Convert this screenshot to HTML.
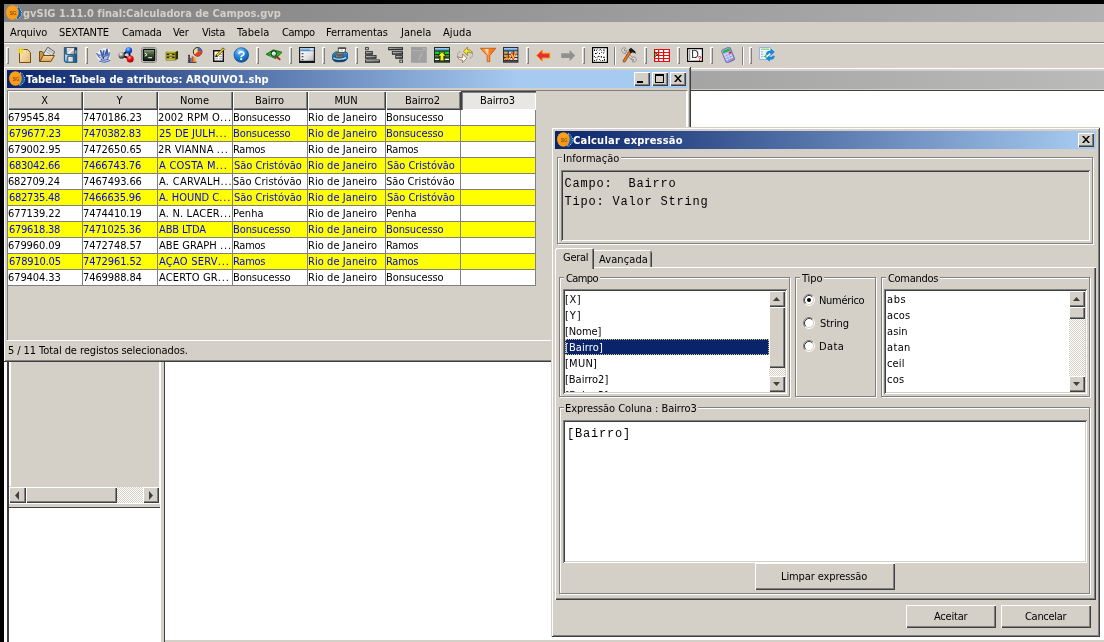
<!DOCTYPE html>
<html><head><meta charset="utf-8"><title>gvSIG</title><style>
*{box-sizing:border-box;margin:0;padding:0}
html,body{width:1104px;height:642px;overflow:hidden;background:#fff}
body{position:relative;font:11px "DejaVu Sans Condensed","Liberation Sans",sans-serif;color:#000;letter-spacing:-.1px}
#w{position:absolute;left:0;top:0;width:1104px;height:642px;overflow:hidden;will-change:transform;background:#fff}
.a{position:absolute}
.t{position:absolute;white-space:nowrap;line-height:13px;height:13px}
.face{background:#d4d0c8}
.btn{position:absolute;background:#d4d0c8;box-shadow:inset 1px 1px 0 #fff,inset -1px -1px 0 #404040,inset -2px -2px 0 #808080}
.sunk{position:absolute;box-shadow:inset 1px 1px 0 #808080,inset -1px -1px 0 #fff,inset 2px 2px 0 #404040,inset -2px -2px 0 #d4d0c8}
.frame{position:absolute;background:#d4d0c8;box-shadow:inset 1px 1px 0 #d4d0c8,inset -1px -1px 0 #404040,inset 2px 2px 0 #fff,inset -2px -2px 0 #808080}
.grp{position:absolute;border:1px solid #808080;box-shadow:1px 1px 0 #fff,inset 1px 1px 0 #fff}
.grp>span{position:absolute;top:-6px;left:4px;background:#d4d0c8;padding:0 1px;line-height:13px;white-space:nowrap}
.tb{font-weight:bold;color:#fff}
.grip{position:absolute;width:3px;height:17px;top:47px;background:#d4d0c8;box-shadow:inset 1px 1px 0 #fff,inset -1px -1px 0 #808080}
.mono{font-family:"Liberation Mono",monospace;font-size:12px;letter-spacing:.8px}
.hatch{background-image:conic-gradient(#fff 25%,#d4d0c8 0 50%,#fff 0 75%,#d4d0c8 0);background-size:2px 2px}
.hd{position:absolute;top:91px;height:19px;background:#d4d0c8;box-shadow:inset 1px 1px 0 #fff,inset -1px -1px 0 #404040,inset -2px -2px 0 #808080;text-align:center;line-height:20px;padding-right:2px}
.row{position:absolute;left:8px;width:528px;height:16px}
.cy{color:#0000ff}
.c{position:absolute;top:0;height:15px;line-height:15px;white-space:nowrap;overflow:hidden;padding-left:1px}
.li{position:absolute;left:0;height:16px;line-height:18px;white-space:nowrap;padding-left:1px}
</style></head><body><div id="w">

<svg width="0" height="0" style="position:absolute"><defs>
<linearGradient id="gPage" x1="0" y1="0" x2="1" y2="1"><stop offset="0" stop-color="#fdeec8"/><stop offset="1" stop-color="#e2b76c"/></linearGradient>
<linearGradient id="gFold" x1="0" y1="0" x2="0" y2="1"><stop offset="0" stop-color="#f3d59a"/><stop offset="1" stop-color="#d9a75a"/></linearGradient>
<linearGradient id="gFlop" x1="0" y1="0" x2="1" y2="0"><stop offset="0" stop-color="#0d5f96"/><stop offset=".35" stop-color="#3f9bd0"/><stop offset="1" stop-color="#0a5588"/></linearGradient>
<linearGradient id="gLabel" x1="0" y1="0" x2="1" y2="1"><stop offset="0" stop-color="#f4f4f4"/><stop offset=".5" stop-color="#c8c8c8"/><stop offset="1" stop-color="#a0a0a0"/></linearGradient>
<radialGradient id="gGray" cx=".4" cy=".3" r=".75"><stop offset="0" stop-color="#ffffff"/><stop offset=".45" stop-color="#909090"/><stop offset="1" stop-color="#101010"/></radialGradient>
<radialGradient id="gBlueB" cx=".4" cy=".3" r=".7"><stop offset="0" stop-color="#a0d0ff"/><stop offset=".5" stop-color="#1860f0"/><stop offset="1" stop-color="#0030a0"/></radialGradient>
<radialGradient id="gRedB" cx=".4" cy=".3" r=".7"><stop offset="0" stop-color="#ffb0b0"/><stop offset=".45" stop-color="#ff1010"/><stop offset="1" stop-color="#a00000"/></radialGradient>
<linearGradient id="gTerm" x1="0" y1="0" x2="0" y2="1"><stop offset="0" stop-color="#90a878"/><stop offset=".45" stop-color="#40543a"/><stop offset="1" stop-color="#0c140a"/></linearGradient>
<radialGradient id="gHelp" cx=".4" cy=".25" r=".8"><stop offset="0" stop-color="#9ad4ff"/><stop offset=".45" stop-color="#2a8ce0"/><stop offset="1" stop-color="#084a98"/></radialGradient>
<linearGradient id="gWin" x1="0" y1="0" x2="1" y2="1"><stop offset="0" stop-color="#ffffff"/><stop offset=".6" stop-color="#e4e4e4"/><stop offset="1" stop-color="#a8a8a8"/></linearGradient>
<linearGradient id="gTitle" x1="0" y1="0" x2="0" y2="1"><stop offset="0" stop-color="#b8dcf8"/><stop offset="1" stop-color="#2f7cc8"/></linearGradient>
<linearGradient id="gBar" x1="0" y1="0" x2="0" y2="1"><stop offset="0" stop-color="#101010"/><stop offset=".3" stop-color="#585858"/><stop offset=".55" stop-color="#a8acac"/><stop offset=".8" stop-color="#505050"/><stop offset="1" stop-color="#080808"/></linearGradient>
<linearGradient id="gBar2" x1="0" y1="0" x2=".25" y2="1"><stop offset="0" stop-color="#eef0f0"/><stop offset=".5" stop-color="#8c9090"/><stop offset="1" stop-color="#3c3c3c"/></linearGradient>
<linearGradient id="gBarB" x1="0" y1="0" x2="0" y2="1"><stop offset="0" stop-color="#909090"/><stop offset=".5" stop-color="#606060"/><stop offset="1" stop-color="#080808"/></linearGradient>
<linearGradient id="gDkGreen" x1="0" y1="0" x2="0" y2="1"><stop offset="0" stop-color="#58a858"/><stop offset="1" stop-color="#185018"/></linearGradient>
<linearGradient id="gFunnel" x1="0" y1="0" x2="1" y2="0"><stop offset="0" stop-color="#f07818"/><stop offset=".4" stop-color="#ffa860"/><stop offset=".6" stop-color="#f88a30"/><stop offset="1" stop-color="#e86a10"/></linearGradient>
<linearGradient id="gPrn" x1="0" y1="0" x2="0" y2="1"><stop offset="0" stop-color="#3c9ad8"/><stop offset=".55" stop-color="#1468b0"/><stop offset="1" stop-color="#06305c"/></linearGradient>
<linearGradient id="gCalc" x1="0" y1="0" x2="1" y2="1"><stop offset="0" stop-color="#c4c4f4"/><stop offset="1" stop-color="#8484cc"/></linearGradient>
<radialGradient id="gLogo" cx=".45" cy=".4" r=".7"><stop offset="0" stop-color="#ffa828"/><stop offset="1" stop-color="#fb9410"/></radialGradient>
</defs></svg>

<div class="a" style="left:4px;top:4px;width:1440px;height:18px;background:linear-gradient(to right,#808080,#c0c0c0)"></div>
<div class="t tb" style="left:23.00px;top:7px;letter-spacing:-0.003px;color:#d4d0c8">gvSIG 1.11.0 final:Calculadora de Campos.gvp</div>
<div class="a" style="left:4px;top:22px;width:1100px;height:20px;background:#d4d0c8;"></div>
<div class="t " style="left:10.00px;top:26px;letter-spacing:-0.100px;">Arquivo</div>
<div class="t " style="left:59.00px;top:26px;letter-spacing:-0.100px;">SEXTANTE</div>
<div class="t " style="left:122.00px;top:26px;letter-spacing:-0.240px;">Camada</div>
<div class="t " style="left:173.00px;top:26px;letter-spacing:-0.100px;">Ver</div>
<div class="t " style="left:202.00px;top:26px;letter-spacing:-0.275px;">Vista</div>
<div class="t " style="left:237.00px;top:26px;letter-spacing:0.180px;">Tabela</div>
<div class="t " style="left:282.00px;top:26px;letter-spacing:-0.450px;">Campo</div>
<div class="t " style="left:326.00px;top:26px;letter-spacing:-0.030px;">Ferramentas</div>
<div class="t " style="left:401.00px;top:26px;letter-spacing:0.040px;">Janela</div>
<div class="t " style="left:443.00px;top:26px;letter-spacing:0.075px;">Ajuda</div>
<div class="a" style="left:4px;top:42px;width:1100px;height:1px;background:#808080;"></div>
<div class="a" style="left:4px;top:43px;width:1100px;height:1px;background:#ffffff;"></div>
<div class="a" style="left:4px;top:44px;width:1100px;height:27px;background:#d4d0c8;"></div>
<div class="grip" style="left:6px"></div>
<div class="grip" style="left:85px"></div>
<div class="grip" style="left:256px"></div>
<div class="grip" style="left:289px"></div>
<div class="grip" style="left:322px"></div>
<div class="grip" style="left:355px"></div>
<div class="grip" style="left:526px"></div>
<div class="grip" style="left:582px"></div>
<div class="grip" style="left:644px"></div>
<div class="grip" style="left:677px"></div>
<div class="grip" style="left:710px"></div>
<div class="grip" style="left:749px"></div>
<svg class="a" style="left:16px;top:47px" width="16" height="16" viewBox="0 0 16 16"><path d="M3.500 2.500h7.800l3.200 3.200v9.800h-11z" fill="url(#gPage)" stroke="#7b4a05"/><path d="M10.600 3.200v3h3.200z" fill="#fff" stroke="#c9a060" stroke-width=".5"/><path d="M4.800.2l1 2.200 2.400.2-1.800 1.600.6 2.400-2.200-1.300-2.100 1.300.6-2.400L1.500 2.600l2.300-.2z" fill="#f6e61c" stroke="#d8c000" stroke-width=".3"/></svg>
<svg class="a" style="left:39px;top:47px" width="16" height="16" viewBox="0 0 16 16"><path d="M.5 14.500v-10h2.600l1.600 1.800h3v8.200z" fill="#c89848" stroke="#7b4a05"/><path d="M8.800.2l6.900 4.600-4 6.600-7.600-4z" fill="#e4e4e4" stroke="#4a4a4a" stroke-width=".9"/><path d="M9 2l5.400 3.600-.8 1.200L8.200 3.400z" fill="#b8b8b8"/><path d="M7.400 4.800l4.800 3" stroke="#9a9a9a" stroke-width=".8"/><path d="M1 14.500l3.200-6h11.200l-3.400 6z" fill="url(#gFold)" stroke="#7b4a05"/></svg>
<svg class="a" style="left:62px;top:47px" width="16" height="16" viewBox="0 0 16 16"><path d="M2.300.4h12.500v15.200H3.800L2.300 14z" fill="url(#gFlop)" stroke="#0a4672" stroke-width=".7"/><path d="M2.900 7c.2 3 .4 5 .2 6.600l1.400.6c0-2.600.6-5 1.800-6.200z" fill="#c4e6fc" opacity=".85"/><path d="M4.300.5h8.300v7H4.300z" fill="url(#gLabel)" stroke="#3c4650" stroke-width=".8"/><path d="M5.400 6.200L10.800 1.400h1v1.400L7.400 6.800z" fill="#fff" opacity=".8"/><path d="M5.900 9.500h5.100v5.400H5.900z" fill="#ececec" stroke="#4a5560" stroke-width=".8"/><path d="M8.600 10.400h1.800v3.800H8.600z" fill="#d4d4d4"/><path d="M13.200.7h1.400v2.200h-1.400z" fill="#062c4c"/><path d="M13.800 3.600v3" stroke="#d8f0ff" stroke-width=".8"/></svg>
<svg class="a" style="left:95px;top:47px" width="16" height="16" viewBox="0 0 16 16"><path d="M.8 5.600l3-.8L4.600 2l2.600.2L8.800 1l2 .4 1.600 1 1.600-.8 1 2.600-.6 3 .8 2.800-.4 2.600.6 1.600-2.600 1.400-4.600.6-4.400-1 .2-2.200-2.200-2.600z" fill="#eef1fa"/><path d="M2 6.200c1.200 2.400 2.600 4.200 5 6l5.600-.6c1.200-2 1.800-4.400 1.600-6.800l-2 1.600L11.800 2.400 9.600 7 8.200 2.200 6.400 7.400z" fill="#a9bbe6"/><path d="M5.400 3l2.200 6.600L9 3.400M10 8.600l2-6.200.6 6" fill="none" stroke="#3f5ca6" stroke-width="1.500" stroke-linejoin="round"/><path d="M1.400 6c1.400 3 3 4.800 5.600 6.400M14.400 5.200c.2 2.600-.6 5-2 6.800M3.600 8.200l5.600 1.200 4.600-1.600" fill="none" stroke="#5673b8" stroke-width="1.200"/><path d="M4.200 14c3.200 1.600 8 1.400 11-.8M5.600 12.600c2.600.8 5.600.6 8-.4" fill="none" stroke="#4a68b0" stroke-width="1.300"/><circle cx="8.200" cy="10.800" r=".9" fill="#141c38"/><path d="M4.600 8.600h1.200v1.200H4.600zM6.400 10.400h1.200v1.200H6.400zM5 10.800h1v1H5z" fill="#f4f6fc"/></svg>
<svg class="a" style="left:118px;top:47px" width="16" height="16" viewBox="0 0 16 16"><path d="M3.6 8.4L10.8 3.2l1.4 8.6z" fill="none" stroke="#111" stroke-width="1.8" stroke-linejoin="round"/><circle cx="3.6" cy="8.4" r="3.1" fill="url(#gGray)"/><circle cx="10.8" cy="3.5" r="3.3" fill="url(#gBlueB)"/><circle cx="12.2" cy="11.9" r="3.5" fill="url(#gRedB)"/></svg>
<svg class="a" style="left:141px;top:47px" width="16" height="16" viewBox="0 0 16 16"><rect x=".5" y=".5" width="15" height="15" rx="2.200" fill="#d8d8d8" stroke="#8a8a8a"/><rect x="2.300" y="2.300" width="11.400" height="11.400" rx=".8" fill="url(#gTerm)" stroke="#050805" stroke-width="1.200"/><path d="M3.900 6.200l2.200 1.500-2.200 1.500" fill="none" stroke="#fff" stroke-width="1"/><path d="M7.200 10.200h3.800v1H7.200z" fill="#fff"/></svg>
<svg class="a" style="left:164px;top:47px" width="16" height="16" viewBox="0 0 16 16"><path d="M2 5l2.6-1.2H14L11.2 5z" fill="#f4f090"/><path d="M11.2 5L14 3.8v8L11.2 13.2z" fill="#2c2c08"/><path d="M2 5h9.2v8.2H2z" fill="#d6cf3a" stroke="#6a6410" stroke-width=".6"/><path d="M2.6 6.6h8v1.6h-8zM2.6 9.6h8v1.6h-8z" fill="#1c1c04"/><path d="M5 6.9h3.2v.8H5zM5 9.9h3.2v.8H5z" fill="#ecec9a"/></svg>
<svg class="a" style="left:187px;top:47px" width="16" height="16" viewBox="0 0 16 16"><circle cx="10.6" cy="4.8" r="4.3" fill="#f1dc94" stroke="#111" stroke-width=".9"/><path d="M10.6 4.8V.5A4.3 4.3 0 0 1 14.7 3.6z" fill="#3c62c4"/><path d="M10.6 4.8l4.1-1.2A4.3 4.3 0 0 1 7.4 7.7z" fill="#e2401c"/><path d="M2.2 7.8v7.4M.8 15.2h8.6M1 8.8h1.2M1 11h1.2M1 13.2h1.2" stroke="#111" stroke-width="1" fill="none"/><path d="M3 11h1.6v3.7H3z" fill="#3c62c4"/><path d="M4.6 9.4h2v5.3h-2z" fill="#e2401c"/><path d="M6.6 10.6h2v4.1h-2z" fill="#f0a020"/></svg>
<svg class="a" style="left:210px;top:47px" width="16" height="16" viewBox="0 0 16 16"><path d="M3.700 3.800h9.600v10.400H3.700z" fill="#fff" stroke="#111" stroke-width="1.400"/><path d="M5.400 9.600h2.600M9.200 9.600h2.800M5.400 11.800h2.600M9.200 11.800h2.800M9.600 7.400h2.400" stroke="#9a9a9a" stroke-width="1"/><path d="M13 .8l1.500 1.500-6.900 6.900-2 .7.600-2.200z" fill="#f7d11e" stroke="#2a2200" stroke-width=".7"/><path d="M5.400 10.100l.7-2.200 1.500 1.400z" fill="#111"/></svg>
<svg class="a" style="left:233px;top:47px" width="16" height="16" viewBox="0 0 16 16"><circle cx="8.3" cy="8" r="7.3" fill="url(#gHelp)" stroke="#0b4c96" stroke-width=".7"/><text x="8.4" y="12.6" font-family="Liberation Sans,sans-serif" font-weight="bold" font-size="13" fill="#fff" text-anchor="middle">?</text></svg>
<svg class="a" style="left:266px;top:47px" width="16" height="16" viewBox="0 0 16 16"><path d="M0 7.300L7.300 2.800 16.100 5.200 9.700 11.700z" fill="#149414" stroke="#0a5a0a" stroke-width=".7"/><path d="M2.600 7.400l4.600-2.800M8.600 10.200l5.800-4.800M11.400 4.600l-3.600 5.600M3.800 8.600l3 .8" stroke="#6ee06e" stroke-width=".8" fill="none"/><path d="M10 9.200l3.600 3.100" stroke="#9a3418" stroke-width="2" stroke-linecap="round"/><circle cx="7.800" cy="6.600" r="2.700" fill="#c8e6dc" stroke="#102a18" stroke-width="1"/><path d="M6.600 6.800c.4-1.400 1.400-1.800 2.400-1.400" stroke="#fff" stroke-width=".8" fill="none"/><path d="M7 7.400l1.400.4" stroke="#8cd88c" stroke-width=".8"/></svg>
<svg class="a" style="left:299px;top:47px" width="16" height="16" viewBox="0 0 16 16"><path d="M.6.6h14.8v14.8H.6z" fill="url(#gWin)" stroke="#1c1c1c" stroke-width="1.2"/><path d="M1.2 1.2h13.6v3H1.2z" fill="url(#gTitle)"/><path d="M11 1.6h3.4v1.8H11z" fill="#d8e4ee"/><path d="M.6 14.6h14.8" stroke="#111" stroke-width="1.6"/><path d="M2.6 6h1.8v1.2H2.6zM2.6 9h1.8v1.2H2.6zM2.6 12h1.8v1.2H2.6z" fill="#4a4a4a"/></svg>
<svg class="a" style="left:332px;top:47px" width="16" height="16" viewBox="0 0 16 16"><path d="M.4 8.500C1 5.600 4 4.600 7 5l6-.2c2.500.2 3.400 2.200 3 4.700-.4 3.500-3 5.300-7 5.300H4.500C1.500 14.800-.2 12 .4 8.500z" fill="url(#gPrn)" stroke="#06305c" stroke-width=".7"/><path d="M1.400 10.800c2.800 1.800 9.800 1.800 12.800-.2" stroke="#b4dcfa" stroke-width="1.500" fill="none"/><path d="M4.700 5.600l6.400-.2-.5 5.200-7.400.2z" fill="#8e8e8e" stroke="#3a3a3a" stroke-width=".7"/><path d="M5.400 6.800l4.800-.1-.3 2.900-5.100.1z" fill="#5e5e5e"/><path d="M6.300 1.100h7.500l-1 4.300H6.300z" fill="#fff" stroke="#3a3a3a" stroke-width=".8"/><path d="M6.300 1.100h7.500" stroke="#2a2a2a" stroke-width="1.200"/><path d="M8.600 2.400h2.200v2H8.600z" fill="#c8c8c8"/><circle cx="4.200" cy="5" r="1" fill="#18a858"/></svg>
<svg class="a" style="left:365px;top:47px" width="16" height="16" viewBox="0 0 16 16"><rect x="0.10" y="0.10" width="3.70" height="3.10" fill="#3a3a3a"/><rect x="1.10" y="1.00" width="1.70" height="1.30" fill="#d4d8d8"/><rect x="0.10" y="4.10" width="7.70" height="3.70" rx=".4" fill="#1e1e1e"/><rect x="0.90" y="4.80" width="6.10" height="2.20" fill="url(#gBar2)"/><rect x="0.10" y="8.10" width="11.40" height="3.70" rx=".4" fill="#1e1e1e"/><rect x="0.90" y="8.80" width="9.80" height="2.20" fill="url(#gBar2)"/><rect x="0.10" y="12.60" width="14.80" height="3.20" rx=".4" fill="#1e1e1e"/><rect x="0.90" y="13.30" width="13.20" height="1.70" fill="url(#gBar2)"/></svg>
<svg class="a" style="left:388px;top:47px" width="16" height="16" viewBox="0 0 16 16"><rect x="0.20" y="0.10" width="14.80" height="3.20" rx=".4" fill="#1e1e1e"/><rect x="1.00" y="0.80" width="13.20" height="1.70" fill="url(#gBar2)"/><rect x="3.90" y="4.10" width="11.10" height="3.70" rx=".4" fill="#1e1e1e"/><rect x="4.70" y="4.80" width="9.50" height="2.20" fill="url(#gBar2)"/><rect x="7.30" y="8.10" width="7.70" height="3.70" rx=".4" fill="#1e1e1e"/><rect x="8.10" y="8.80" width="6.10" height="2.20" fill="url(#gBar2)"/><rect x="11.30" y="12.60" width="3.70" height="3.20" fill="#3a3a3a"/><rect x="12.30" y="13.50" width="1.70" height="1.40" fill="#d4d8d8"/></svg>
<svg class="a" style="left:411px;top:47px" width="16" height="16" viewBox="0 0 16 16"><path d="M0 0h15.800v15.800H0z" fill="#a0a0a0"/><path d="M.5.500h15v2.600H.5z" fill="#9c9c9c"/><path d="M.5 3.600h15" stroke="#b4b4b4" stroke-width=".8"/><path d="M7.600 13.400l3.800-8" stroke="#b0b0b0" stroke-width="1.400"/><path d="M11.600.8h3v1.600h-3z" fill="#b4b4b4"/></svg>
<svg class="a" style="left:434px;top:47px" width="16" height="16" viewBox="0 0 16 16"><path d="M0 0h16v15.700H0z" fill="#1e2a1e"/><path d="M1 1h14v2.600H1z" fill="url(#gTitle)"/><path d="M1 4.600h14v2.400H1z" fill="#18d418"/><path d="M1 8h14v2.600H1z" fill="url(#gDkGreen)"/><path d="M1 11.600h14v1.400H1z" fill="#fff"/><path d="M1 13.600h14v1.200H1z" fill="#2c4a2c"/><path d="M5.400 4.600v10.400M10.600 4.600v10.400" stroke="#0c3a0c" stroke-width=".8"/><path d="M8 4.800l4 4.200H9.800v4.800H6.200V9H4z" fill="#f6f01a" stroke="#3c3400" stroke-width=".7"/></svg>
<svg class="a" style="left:457px;top:47px" width="16" height="16" viewBox="0 0 16 16"><path d="M11 4.400c3.600-.2 5.400 2.400 4.400 4.600-.6 1.400-1.800 2.200-3.400 2.400" fill="none" stroke="#c8c8d0" stroke-width="2"/><path d="M5 11.400c-3.600.2-5.400-2.400-4.400-4.600C1.200 5.400 2.400 4.600 4 4.400" fill="none" stroke="#c8c8d0" stroke-width="2"/><path d="M11 4.400c3.600-.2 5.400 2.400 4.400 4.600-.6 1.400-1.800 2.200-3.400 2.400M5 11.400c-3.600.2-5.400-2.400-4.400-4.600C1.200 5.400 2.400 4.600 4 4.400" fill="none" stroke="#a87830" stroke-width=".8" stroke-dasharray="1 1"/><path d="M6.600 4.400L10.400.2v2.600c2.600-.2 4.600 1 5 3.400-1.400-1-3-1.400-5-1v3.200z" fill="#f8ee22" stroke="#7a6a20" stroke-width=".7"/><path d="M9.800 11.200L5.600 15.600V13c-2.600.2-4.600-1-5-3.400 1.400 1 3 1.400 5 1V7z" fill="#fff" stroke="#8a5a20" stroke-width=".7"/></svg>
<svg class="a" style="left:480px;top:47px" width="16" height="16" viewBox="0 0 16 16"><path d="M.4 1.300h15.400L9.800 8.700v6H7.200v-6z" fill="url(#gFunnel)" stroke="#c45608" stroke-width=".8" stroke-linejoin="round"/><path d="M5 2l2.800 5.600L8.600 2z" fill="#ffe4c8" opacity=".85"/><path d="M8.800 2.200c1.800-.6 3.200.2 3.200 1.400 0 1.400-1.600 2.200-2.800 1.800z" fill="#f47c1c"/></svg>
<svg class="a" style="left:503px;top:47px" width="16" height="16" viewBox="0 0 16 16"><path d="M0 0h15.400v15.700H0z" fill="#26303c"/><path d="M1 1h13.400v2.600H1z" fill="url(#gTitle)"/><path d="M1 4.600h3.800v2.200H1zM1 7.800h3.800v2.200H1z" fill="#dca23c"/><path d="M1 11h3.800v2H1z" fill="#e8e8e8"/><path d="M5.800 4.600h4v2.200h-4zM10.800 4.600h3.600v2.200h-3.600zM5.800 7.800h4v2.200h-4zM10.800 7.800h3.600v2.200h-3.600zM5.800 11h4v2h-4zM10.800 11h3.600v2h-3.600z" fill="#dcdce0"/><path d="M1 14h13.400v.8H1z" fill="#4a5460"/><path d="M1.200 12.600l2.800-1.800 2 1.600 2.800-5.600 1.600 4.600L13 4.200" fill="none" stroke="#e82020" stroke-width="2"/><path d="M1.200 12.600l2.800-1.800 2 1.600 2.800-5.600 1.600 4.600L13 4.200" fill="none" stroke="#f8f020" stroke-width="1"/></svg>
<svg class="a" style="left:536px;top:47px" width="16" height="16" viewBox="0 0 16 16"><path d="M.6 8.500L6.200 3v3.200h7.600v4.800H6.200v3.200z" fill="#e2303a" stroke="#ff9a00" stroke-width="1" stroke-linejoin="miter"/></svg>
<svg class="a" style="left:560px;top:47px" width="16" height="16" viewBox="0 0 16 16"><path d="M15.200 8.500L9.600 3v3.200H1.200v4.800h8.400v3.200z" fill="#919191"/></svg>
<svg class="a" style="left:592px;top:47px" width="16" height="16" viewBox="0 0 16 16"><path d="M.6.600h14.800v14.800H.6z" fill="#fff" stroke="#000" stroke-width="1.200"/><path d="M2.500 2.400v1.600M4 3.700l1.400-1.300M7.200 3.500l1.100-1.100 1.100 1.100M11 3.100h1.800M3 6.500h1.400l1-1M7 6.500h1M9.200 5.300h.9M11 6.500l1.400-1.300M2.200 9.200l1.400 1.400M5.200 10.500l1-1.100h1.300M9.300 9v1.700M11 10.300h1.800M2.100 13.500h1M4 13.500l1.400-1.300M7.200 12.200l1.400 1.300M10.100 13.500h1M12.500 12v1.700" fill="none" stroke="#000" stroke-width="1"/></svg>
<svg class="a" style="left:621px;top:47px" width="16" height="16" viewBox="0 0 16 16"><path d="M2.600 3.600l10 9.200" stroke="#8a8a8a" stroke-width="2.600" stroke-linecap="round"/><path d="M2.600 3.600l10 9.200" stroke="#e4e4e4" stroke-width="1.200" stroke-linecap="round"/><path d="M.6 3.800a2.600 2.600 0 0 1 4-2.600L3 3l.8 1 2-.6A2.600 2.600 0 0 1 2 5.800z" fill="#dcdcdc" stroke="#6a6a6a" stroke-width=".6"/><path d="M15.200 12a2.600 2.600 0 0 1-3.800 2.800l1.600-1.600-.8-1.200-2 .6a2.600 2.600 0 0 1 3.800-2.400z" fill="#dcdcdc" stroke="#6a6a6a" stroke-width=".6"/><path d="M3.200 14l6.400-10" stroke="#8a3c08" stroke-width="3" stroke-linecap="round"/><path d="M3.200 14l6.400-10" stroke="#e2781c" stroke-width="1.800" stroke-linecap="round"/><path d="M7.600 2.800L10 .8l4.400 3.600.4 2.600-1.600-1.200-2.200-.2-1.400 1z" fill="#1a1a1a"/></svg>
<svg class="a" style="left:654px;top:47px" width="16" height="16" viewBox="0 0 16 16"><path d="M0 2h16v13H0z" fill="#ea0c0c"/><path d="M1.2 3h2.8v2h-2.8zM5.2 3h3.8v2h-3.8zM10.2 3h4.6v2h-4.6zM1.2 6h2.8v2h-2.8zM5.2 6h3.8v2h-3.8zM10.2 6h4.6v2h-4.6zM1.2 9h2.8v2h-2.8zM5.2 9h3.8v2h-3.8zM10.2 9h4.6v2h-4.6zM1.2 12h2.8v2h-2.8zM5.2 12h3.8v2h-3.8zM10.2 12h4.6v2h-4.6z" fill="#fff"/><path d="M.3 4.800l3.400 2.700L.3 10.200z" fill="#ff9a00" stroke="#111" stroke-width=".8"/></svg>
<svg class="a" style="left:687px;top:47px" width="16" height="16" viewBox="0 0 16 16"><path d="M.6 1.600h14.800v12.800H.6z" fill="#fff" stroke="#000" stroke-width="1.150"/><path d="M2.200 3.600h1v1h-1zM2.200 5.600h1v1h-1zM2.200 7.600h1v1h-1zM2.200 9.600h1v1h-1zM2.200 11.600h1v1h-1z" fill="#000"/><text x="4.200" y="11.200" font-family="Liberation Sans,sans-serif" font-size="10.500" fill="#222">D</text><text x="10.600" y="14.200" font-family="Liberation Sans,sans-serif" font-weight="bold" font-size="7" fill="#e01010">?</text></svg>
<svg class="a" style="left:720px;top:47px" width="16" height="16" viewBox="0 0 16 16"><g transform="rotate(-22 8 8)"><rect x="3.400" y="1" width="9.400" height="14" rx="1.400" fill="url(#gCalc)" stroke="#5c5ca8" stroke-width=".7"/><path d="M4.400 2.200h7.400v2.400H4.400z" fill="#22b83c"/><path d="M9.800 5.800h2v1.600h-2z" fill="#e81c2c"/><path d="M4.400 5.800h2v1.600h-2zM7.100 5.800h2v1.600h-2zM4.400 8.400h2v1.600h-2zM7.100 8.400h2v1.600h-2zM9.800 8.400h2v1.600h-2zM4.400 11h2v1.600h-2zM7.100 11h2v1.600h-2zM9.800 11h2v1.600h-2z" fill="#dcdcfa"/></g></svg>
<svg class="a" style="left:759px;top:47px" width="16" height="16" viewBox="0 0 16 16"><path d="M.6.600h10.800v11.800H.6z" fill="#fff" stroke="#8cb0e4" stroke-width="1"/><path d="M2 2.200h8" stroke="#5cc85c" stroke-width="1"/><path d="M2 4h2.400v1.600H2zM2 6.400h2.400v1.600H2zM2 8.800h2.400v1.600H2z" fill="#a8c4ec"/><path d="M5.200 4h5v1.600h-5zM5.200 6.400h5v1.600h-5z" fill="#dce8f8"/><path d="M4.600 9.400l3-2.200v4.400z" fill="#40c060"/><path d="M6.800 7.400c.2-2.800 2.600-4.200 5-3.600V1.600l4 3.400-4 3.400V6.400c-1.600-.4-2.600.2-2.800 1.600z" fill="#1888d4"/><path d="M15.800 9c-.2 2.800-2.600 4.200-5 3.600v2.200l-4-3.400 4-3.400v2c1.600.4 2.600-.2 2.800-1.600z" fill="#1888d4"/></svg>
<svg class="a" style="left:6px;top:5px" width="17" height="16" viewBox="0 0 17 16"><path d="M11 1.800c1.800-.2 2.600 1 3 2.600 1.600 1.200 2 2.800 1.400 4.400.2 1.600-.6 2.800-1.800 3.400-.6 1.600-1.600 2.200-3 2.400z" fill="#0b62b4" stroke="#fff" stroke-width=".8" stroke-dasharray=".9 1.300"/><ellipse cx="6.400" cy="7.500" rx="6.300" ry="7.300" fill="url(#gLogo)"/><path d="M3.200 5h7.400v5.800H3.200z" fill="none" stroke="#f08c10" stroke-width=".5"/><text x="3.800" y="10.300" font-family="Liberation Sans,sans-serif" font-weight="bold" font-size="5.400" fill="#8a4e08" textLength="6.400" lengthAdjust="spacingAndGlyphs">SIG</text></svg>
<div class="a" style="left:742px;top:47px;width:1px;height:18px;background:#808080;"></div>
<div class="a" style="left:743px;top:47px;width:1px;height:18px;background:#ffffff;"></div>
<div class="a" style="left:614px;top:47px;width:1px;height:18px;background:#808080;"></div>
<div class="a" style="left:615px;top:47px;width:1px;height:18px;background:#ffffff;"></div>
<div class="a" style="left:4px;top:68px;width:1100px;height:1px;background:#ffffff;"></div>
<div class="a" style="left:4px;top:71px;width:1200px;height:18px;background:linear-gradient(to right,#808080,#c0c0c0)"></div>
<div class="a" style="left:4px;top:89px;width:1100px;height:1px;background:#d4d0c8;"></div>
<div class="a" style="left:4px;top:90px;width:1100px;height:1px;background:#404040;"></div>
<div class="a" style="left:4px;top:91px;width:1100px;height:551px;background:#fff;"></div>
<div class="a" style="left:165px;top:640px;width:939px;height:2px;background:#d4d0c8;"></div>
<div class="a" style="left:4px;top:362px;width:3px;height:280px;background:#fbfaf8;"></div>
<div class="a" style="left:7px;top:362px;width:2px;height:280px;background:#404040;"></div>
<div class="a" style="left:9px;top:362px;width:2px;height:145px;background:#ffffff;"></div>
<div class="a" style="left:11px;top:362px;width:148px;height:124px;background:#d4d0c8;"></div>
<div class="a" style="left:159px;top:362px;width:2px;height:280px;background:#ffffff;"></div>
<div class="a" style="left:161px;top:362px;width:3px;height:280px;background:#d4d0c8;"></div>
<div class="a" style="left:164px;top:362px;width:1px;height:280px;background:#404040;"></div>
<div class="a" style="left:9px;top:486px;width:150px;height:17px;background:#d4d0c8;"></div>
<div class="btn" style="left:9px;top:487px;width:17px;height:16px"></div>
<div class="btn" style="left:26px;top:487px;width:91px;height:16px"></div>
<div class="a hatch" style="left:117px;top:487px;width:26px;height:16px"></div>
<div class="btn" style="left:143px;top:487px;width:16px;height:16px"></div>
<svg class="a" style="left:15px;top:491px" width="5" height="9"><path d="M4 0v9L0 4.5z" fill="#404040"/></svg>
<svg class="a" style="left:149px;top:491px" width="5" height="9"><path d="M0 0v9L4 4.5z" fill="#404040"/></svg>
<div class="a" style="left:9px;top:503px;width:150px;height:1px;background:#ffffff;"></div>
<div class="a" style="left:9px;top:504px;width:151px;height:3px;background:#d4d0c8;"></div>
<div class="a" style="left:8px;top:507px;width:152px;height:1px;background:#404040;"></div>
<div class="a" style="left:9px;top:508px;width:152px;height:134px;background:#fff;"></div>
<div class="frame" style="left:3px;top:66px;width:688px;height:296px"></div>
<div class="a" style="left:7px;top:70px;width:680px;height:18px;background:linear-gradient(to right,#0a246a,#a6caf0 75%)"></div>
<svg class="a" style="left:9px;top:71px" width="17" height="16" viewBox="0 0 17 16"><path d="M11 1.800c1.800-.2 2.600 1 3 2.600 1.600 1.200 2 2.800 1.400 4.400.2 1.600-.6 2.800-1.800 3.400-.6 1.600-1.600 2.200-3 2.400z" fill="#0b62b4" stroke="#fff" stroke-width=".8" stroke-dasharray=".9 1.300"/><ellipse cx="6.400" cy="7.500" rx="6.300" ry="7.300" fill="url(#gLogo)"/><path d="M3.200 5h7.400v5.800H3.200z" fill="none" stroke="#f08c10" stroke-width=".5"/><text x="3.800" y="10.300" font-family="Liberation Sans,sans-serif" font-weight="bold" font-size="5.400" fill="#8a4e08" textLength="6.400" lengthAdjust="spacingAndGlyphs">SIG</text></svg>
<div class="t tb" style="left:26.00px;top:73px;letter-spacing:0.057px;">Tabela: Tabela de atributos: ARQUIVO1.shp</div>
<div class="btn" style="left:634px;top:72px;width:16px;height:14px"></div>
<div class="btn" style="left:652px;top:72px;width:16px;height:14px"></div>
<div class="btn" style="left:670px;top:72px;width:16px;height:14px"></div>
<div class="a" style="left:637px;top:81px;width:6px;height:2px;background:#000"></div>
<div class="a" style="left:655px;top:74px;width:9px;height:9px;border:1px solid #000;border-top-width:2px"></div>
<svg class="a" style="left:674px;top:75px" width="8" height="7"><path d="M0 0h2l2 2.5L6 0h2L5 3.5 8 7H6L4 4.5 2 7H0l3-3.5z" fill="#000"/></svg>
<div class="a" style="left:7px;top:90px;width:680px;height:1px;background:#808080;"></div>
<div class="a" style="left:7px;top:90px;width:1px;height:251px;background:#808080;"></div>
<div class="a" style="left:7px;top:340px;width:681px;height:1px;background:#ffffff;"></div>
<div class="a" style="left:686px;top:91px;width:2px;height:250px;background:#ffffff;"></div>
<div class="hd" style="left:8px;width:75px">X</div>
<div class="hd" style="left:83px;width:75px">Y</div>
<div class="hd" style="left:158px;width:75px">Nome</div>
<div class="hd" style="left:233px;width:75px">Bairro</div>
<div class="hd" style="left:308px;width:78px">MUN</div>
<div class="hd" style="left:386px;width:75px">Bairro2</div>
<div class="hd" style="left:461px;width:75px;background:#e9e7e3;box-shadow:inset 1px 1px 0 #404040,inset 2px 2px 0 #808080,inset -1px -1px 0 #fff">Bairro3</div>
<div class="a" style="left:8px;top:110px;width:528px;height:176px;background:#fff;"></div>
<div class="t " style="left:8.00px;top:111px;letter-spacing:-0.188px;">679545.84</div>
<div class="t " style="left:83.00px;top:111px;letter-spacing:-0.100px;">7470186.23</div>
<div class="t " style="left:158.00px;top:111px;letter-spacing:0.134px;">2002 RPM O<span style="letter-spacing:.85px">...</span></div>
<div class="t " style="left:233.00px;top:111px;letter-spacing:-0.100px;">Bonsucesso</div>
<div class="t " style="left:308.00px;top:111px;letter-spacing:0.062px;">Rio de Janeiro</div>
<div class="t " style="left:386.00px;top:111px;letter-spacing:-0.100px;">Bonsucesso</div>
<div class="a" style="left:8px;top:125px;width:528px;height:1px;background:#808080;"></div>
<div class="a" style="left:8px;top:126px;width:528px;height:15px;background:#ffff00;"></div>
<div class="t cy" style="left:9.00px;top:127px;letter-spacing:-0.187px;">679677.23</div>
<div class="t cy" style="left:83.00px;top:127px;letter-spacing:-0.178px;">7470382.83</div>
<div class="t cy" style="left:159.00px;top:127px;letter-spacing:0.056px;">25 DE JULH<span style="letter-spacing:.85px">...</span></div>
<div class="t cy" style="left:233.00px;top:127px;letter-spacing:-0.100px;">Bonsucesso</div>
<div class="t cy" style="left:308.00px;top:127px;letter-spacing:0.062px;">Rio de Janeiro</div>
<div class="t cy" style="left:386.00px;top:127px;letter-spacing:-0.100px;">Bonsucesso</div>
<div class="a" style="left:8px;top:141px;width:528px;height:1px;background:#808080;"></div>
<div class="t " style="left:8.00px;top:143px;letter-spacing:-0.101px;">679002.95</div>
<div class="t " style="left:83.00px;top:143px;letter-spacing:-0.100px;">7472650.65</div>
<div class="t " style="left:158.00px;top:143px;letter-spacing:0.134px;">2R VIANNA <span style="letter-spacing:.85px">...</span></div>
<div class="t " style="left:233.00px;top:143px;letter-spacing:-0.275px;">Ramos</div>
<div class="t " style="left:308.00px;top:143px;letter-spacing:0.062px;">Rio de Janeiro</div>
<div class="t " style="left:386.00px;top:143px;letter-spacing:-0.275px;">Ramos</div>
<div class="a" style="left:8px;top:157px;width:528px;height:1px;background:#808080;"></div>
<div class="a" style="left:8px;top:158px;width:528px;height:15px;background:#ffff00;"></div>
<div class="t cy" style="left:9.00px;top:159px;letter-spacing:-0.274px;">683042.66</div>
<div class="t cy" style="left:83.00px;top:159px;letter-spacing:-0.178px;">7466743.76</div>
<div class="t cy" style="left:159.00px;top:159px;letter-spacing:0.249px;">A COSTA M<span style="letter-spacing:.85px">...</span></div>
<div class="t cy" style="left:234.00px;top:159px;letter-spacing:-0.042px;">São Cristóvão</div>
<div class="t cy" style="left:308.00px;top:159px;letter-spacing:0.062px;">Rio de Janeiro</div>
<div class="t cy" style="left:387.00px;top:159px;letter-spacing:-0.042px;">São Cristóvão</div>
<div class="a" style="left:8px;top:173px;width:528px;height:1px;background:#808080;"></div>
<div class="t " style="left:8.00px;top:175px;letter-spacing:-0.188px;">682709.24</div>
<div class="t " style="left:83.00px;top:175px;letter-spacing:-0.100px;">7467493.66</div>
<div class="t " style="left:159.00px;top:175px;letter-spacing:0.289px;">A. CARVALH<span style="letter-spacing:.85px">...</span></div>
<div class="t " style="left:233.00px;top:175px;letter-spacing:0.016px;">São Cristóvão</div>
<div class="t " style="left:308.00px;top:175px;letter-spacing:0.062px;">Rio de Janeiro</div>
<div class="t " style="left:386.00px;top:175px;letter-spacing:0.016px;">São Cristóvão</div>
<div class="a" style="left:8px;top:189px;width:528px;height:1px;background:#808080;"></div>
<div class="a" style="left:8px;top:190px;width:528px;height:15px;background:#ffff00;"></div>
<div class="t cy" style="left:9.00px;top:191px;letter-spacing:-0.274px;">682735.48</div>
<div class="t cy" style="left:83.00px;top:191px;letter-spacing:-0.178px;">7466635.96</div>
<div class="t cy" style="left:159.00px;top:191px;letter-spacing:-0.022px;">A. HOUND C<span style="letter-spacing:.85px">...</span></div>
<div class="t cy" style="left:234.00px;top:191px;letter-spacing:-0.042px;">São Cristóvão</div>
<div class="t cy" style="left:308.00px;top:191px;letter-spacing:0.062px;">Rio de Janeiro</div>
<div class="t cy" style="left:387.00px;top:191px;letter-spacing:-0.042px;">São Cristóvão</div>
<div class="a" style="left:8px;top:205px;width:528px;height:1px;background:#808080;"></div>
<div class="t " style="left:8.00px;top:207px;letter-spacing:-0.100px;">677139.22</div>
<div class="t " style="left:83.00px;top:207px;letter-spacing:-0.100px;">7474410.19</div>
<div class="t " style="left:159.00px;top:207px;letter-spacing:0.180px;">A. N. LACER<span style="letter-spacing:.85px">...</span></div>
<div class="t " style="left:233.00px;top:207px;letter-spacing:0.075px;">Penha</div>
<div class="t " style="left:308.00px;top:207px;letter-spacing:0.062px;">Rio de Janeiro</div>
<div class="t " style="left:386.00px;top:207px;letter-spacing:0.075px;">Penha</div>
<div class="a" style="left:8px;top:221px;width:528px;height:1px;background:#808080;"></div>
<div class="a" style="left:8px;top:222px;width:528px;height:15px;background:#ffff00;"></div>
<div class="t cy" style="left:9.00px;top:223px;letter-spacing:-0.274px;">679618.38</div>
<div class="t cy" style="left:83.00px;top:223px;letter-spacing:-0.178px;">7471025.36</div>
<div class="t cy" style="left:159.00px;top:223px;letter-spacing:-0.100px;">ABB LTDA</div>
<div class="t cy" style="left:233.00px;top:223px;letter-spacing:-0.100px;">Bonsucesso</div>
<div class="t cy" style="left:308.00px;top:223px;letter-spacing:0.062px;">Rio de Janeiro</div>
<div class="t cy" style="left:386.00px;top:223px;letter-spacing:-0.100px;">Bonsucesso</div>
<div class="a" style="left:8px;top:237px;width:528px;height:1px;background:#808080;"></div>
<div class="t " style="left:8.00px;top:239px;letter-spacing:-0.101px;">679960.09</div>
<div class="t " style="left:83.00px;top:239px;letter-spacing:-0.100px;">7472748.57</div>
<div class="t " style="left:159.00px;top:239px;letter-spacing:0.056px;">ABE GRAPH <span style="letter-spacing:.85px">...</span></div>
<div class="t " style="left:233.00px;top:239px;letter-spacing:-0.275px;">Ramos</div>
<div class="t " style="left:308.00px;top:239px;letter-spacing:0.062px;">Rio de Janeiro</div>
<div class="t " style="left:386.00px;top:239px;letter-spacing:-0.275px;">Ramos</div>
<div class="a" style="left:8px;top:253px;width:528px;height:1px;background:#808080;"></div>
<div class="a" style="left:8px;top:254px;width:528px;height:15px;background:#ffff00;"></div>
<div class="t cy" style="left:9.00px;top:255px;letter-spacing:-0.187px;">678910.05</div>
<div class="t cy" style="left:83.00px;top:255px;letter-spacing:-0.100px;">7472961.52</div>
<div class="t cy" style="left:159.00px;top:255px;letter-spacing:0.249px;">AÇAO SERV<span style="letter-spacing:.85px">...</span></div>
<div class="t cy" style="left:233.00px;top:255px;letter-spacing:-0.275px;">Ramos</div>
<div class="t cy" style="left:308.00px;top:255px;letter-spacing:0.062px;">Rio de Janeiro</div>
<div class="t cy" style="left:386.00px;top:255px;letter-spacing:-0.275px;">Ramos</div>
<div class="a" style="left:8px;top:269px;width:528px;height:1px;background:#808080;"></div>
<div class="t " style="left:8.00px;top:271px;letter-spacing:-0.101px;">679404.33</div>
<div class="t " style="left:83.00px;top:271px;letter-spacing:-0.100px;">7469988.84</div>
<div class="t " style="left:159.00px;top:271px;letter-spacing:0.162px;">ACERTO GR<span style="letter-spacing:.85px">...</span></div>
<div class="t " style="left:233.00px;top:271px;letter-spacing:-0.100px;">Bonsucesso</div>
<div class="t " style="left:308.00px;top:271px;letter-spacing:0.062px;">Rio de Janeiro</div>
<div class="t " style="left:386.00px;top:271px;letter-spacing:-0.100px;">Bonsucesso</div>
<div class="a" style="left:8px;top:285px;width:528px;height:1px;background:#808080;"></div>
<div class="a" style="left:82px;top:110px;width:1px;height:176px;background:#808080;"></div>
<div class="a" style="left:157px;top:110px;width:1px;height:176px;background:#808080;"></div>
<div class="a" style="left:232px;top:110px;width:1px;height:176px;background:#808080;"></div>
<div class="a" style="left:307px;top:110px;width:1px;height:176px;background:#808080;"></div>
<div class="a" style="left:385px;top:110px;width:1px;height:176px;background:#808080;"></div>
<div class="a" style="left:460px;top:110px;width:1px;height:176px;background:#808080;"></div>
<div class="a" style="left:535px;top:110px;width:1px;height:176px;background:#808080;"></div>
<div class="t " style="left:8.00px;top:344px;letter-spacing:-0.081px;">5 / 11 Total de registos selecionados.</div>
<div class="frame" style="left:551px;top:127px;width:549px;height:510px"></div>
<div class="a" style="left:555px;top:131px;width:541px;height:18px;background:linear-gradient(to right,#0a246a,#a6caf0 98%)"></div>
<svg class="a" style="left:557px;top:132px" width="17" height="16" viewBox="0 0 17 16"><path d="M11 1.800c1.800-.2 2.600 1 3 2.600 1.600 1.200 2 2.800 1.400 4.400.2 1.600-.6 2.800-1.800 3.400-.6 1.600-1.600 2.200-3 2.400z" fill="#0b62b4" stroke="#fff" stroke-width=".8" stroke-dasharray=".9 1.300"/><ellipse cx="6.400" cy="7.500" rx="6.300" ry="7.300" fill="url(#gLogo)"/><path d="M3.200 5h7.400v5.800H3.200z" fill="none" stroke="#f08c10" stroke-width=".5"/><text x="3.800" y="10.300" font-family="Liberation Sans,sans-serif" font-weight="bold" font-size="5.400" fill="#8a4e08" textLength="6.400" lengthAdjust="spacingAndGlyphs">SIG</text></svg>
<div class="t tb" style="left:573.00px;top:134px;letter-spacing:0.229px;">Calcular expressão</div>
<div class="btn" style="left:1078px;top:133px;width:16px;height:14px"></div>
<svg class="a" style="left:1082px;top:136px" width="8" height="7"><path d="M0 0h2l2 2.5L6 0h2L5 3.5 8 7H6L4 4.5 2 7H0l3-3.5z" fill="#000"/></svg>
<div class="a" style="left:555px;top:267px;width:541px;height:333px;box-shadow:inset 1px 1px 0 #fff,inset -1px -1px 0 #404040,inset -2px -2px 0 #808080"></div>
<div class="grp" style="left:557px;top:157px;width:536px;height:87px"></div>
<div class="a" style="left:562px;top:157px;width:59px;height:2px;background:#d4d0c8;"></div>
<div class="t " style="left:563.00px;top:152px;letter-spacing:0.056px;">Informação</div>
<div class="sunk" style="left:561px;top:170px;width:529px;height:71px"></div>
<div class="t mono" style="left:564.5px;top:177px;line-height:15px;height:15px">Campo:&nbsp; Bairro</div>
<div class="t mono" style="left:564.5px;top:195px;line-height:15px;height:15px">Tipo: Valor String</div>
<div class="a" style="left:555px;top:248px;width:39px;height:21px;background:#d4d0c8;border-radius:2px 2px 0 0;box-shadow:inset 1px 1px 0 #fff,inset -1px 0 0 #404040,inset -2px 0 0 #808080"></div>
<div class="a" style="left:594px;top:250px;width:58px;height:17px;background:#d4d0c8;border-radius:0 2px 0 0;box-shadow:inset 0 1px 0 #fff,inset -1px 0 0 #404040,inset -2px 0 0 #808080"></div>
<div class="a" style="left:556px;top:267px;width:36px;height:2px;background:#d4d0c8;"></div>
<div class="t " style="left:563.00px;top:251px;letter-spacing:-0.275px;">Geral</div>
<div class="t " style="left:599.00px;top:253px;letter-spacing:0.100px;">Avançada</div>
<div class="grp" style="left:559px;top:277px;width:231px;height:120px"></div>
<div class="grp" style="left:795px;top:277px;width:81px;height:120px"></div>
<div class="grp" style="left:881px;top:277px;width:209px;height:120px"></div>
<div class="a" style="left:564px;top:277px;width:36px;height:2px;background:#d4d0c8;"></div>
<div class="t " style="left:566.00px;top:272px;letter-spacing:-0.625px;">Campo</div>
<div class="a" style="left:800px;top:277px;width:24px;height:2px;background:#d4d0c8;"></div>
<div class="t " style="left:802.00px;top:272px;letter-spacing:-0.100px;">Tipo</div>
<div class="a" style="left:886px;top:277px;width:54px;height:2px;background:#d4d0c8;"></div>
<div class="t " style="left:888.00px;top:272px;letter-spacing:-0.300px;">Comandos</div>
<div class="sunk" style="left:563px;top:289px;width:224px;height:105px;background:#fff"></div>
<div class="a" style="left:565px;top:339px;width:204px;height:16px;background:#0a246a;outline:1px dotted #d4c890;outline-offset:-1px;"></div>
<div class="t " style="left:565.00px;top:293px;letter-spacing:0.600px;">[X]</div>
<div class="t " style="left:565.00px;top:309px;letter-spacing:0.950px;">[Y]</div>
<div class="t " style="left:565.00px;top:325px;letter-spacing:-0.100px;">[Nome]</div>
<div class="t " style="left:565.00px;top:341px;letter-spacing:0.100px;color:#fff;">[Bairro]</div>
<div class="t " style="left:565.00px;top:357px;letter-spacing:0.250px;">[MUN]</div>
<div class="t " style="left:565.00px;top:373px;letter-spacing:-0.013px;">[Bairro2]</div>
<div class="a" style="left:565px;top:387px;width:204px;height:5px;overflow:hidden"><div class="t" style="left:0.5px;top:2px">[Bairro3]</div></div>
<div class="a hatch" style="left:769px;top:291px;width:16px;height:101px"></div>
<div class="btn" style="left:769px;top:291px;width:16px;height:16px"></div>
<div class="btn" style="left:769px;top:307px;width:16px;height:61px"></div>
<div class="btn" style="left:769px;top:376px;width:16px;height:16px"></div>
<svg class="a" style="left:773px;top:297px" width="7" height="4"><path d="M3.500 0L7 4H0z" fill="#404040"/></svg>
<svg class="a" style="left:773px;top:382px" width="7" height="4"><path d="M0 0h7L3.500 4z" fill="#404040"/></svg>
<svg class="a" style="left:803px;top:294px" width="12" height="12" viewBox="0 0 12 12"><circle cx="6" cy="6" r="4.600" fill="#fff"/><path d="M2.11 9.89A5.5 5.5 0 0 1 9.89 2.11" fill="none" stroke="#808080" stroke-width="1"/><path d="M9.89 2.11A5.5 5.5 0 0 1 2.11 9.89" fill="none" stroke="#fff" stroke-width="1"/><path d="M2.82 9.18A4.5 4.5 0 0 1 9.18 2.82" fill="none" stroke="#404040" stroke-width="1"/><path d="M9.18 2.82A4.5 4.5 0 0 1 2.82 9.18" fill="none" stroke="#d4d0c8" stroke-width="1"/></svg>
<div class="a" style="left:807px;top:298px;width:4px;height:4px;border-radius:50%;background:#000"></div>
<div class="t " style="left:819.00px;top:294px;letter-spacing:-0.300px;">Numérico</div>
<svg class="a" style="left:803px;top:317px" width="12" height="12" viewBox="0 0 12 12"><circle cx="6" cy="6" r="4.600" fill="#fff"/><path d="M2.11 9.89A5.5 5.5 0 0 1 9.89 2.11" fill="none" stroke="#808080" stroke-width="1"/><path d="M9.89 2.11A5.5 5.5 0 0 1 2.11 9.89" fill="none" stroke="#fff" stroke-width="1"/><path d="M2.82 9.18A4.5 4.5 0 0 1 9.18 2.82" fill="none" stroke="#404040" stroke-width="1"/><path d="M9.18 2.82A4.5 4.5 0 0 1 2.82 9.18" fill="none" stroke="#d4d0c8" stroke-width="1"/></svg>
<div class="t " style="left:820.00px;top:317px;letter-spacing:-0.100px;">String</div>
<svg class="a" style="left:803px;top:340px" width="12" height="12" viewBox="0 0 12 12"><circle cx="6" cy="6" r="4.600" fill="#fff"/><path d="M2.11 9.89A5.5 5.5 0 0 1 9.89 2.11" fill="none" stroke="#808080" stroke-width="1"/><path d="M9.89 2.11A5.5 5.5 0 0 1 2.11 9.89" fill="none" stroke="#fff" stroke-width="1"/><path d="M2.82 9.18A4.5 4.5 0 0 1 9.18 2.82" fill="none" stroke="#404040" stroke-width="1"/><path d="M9.18 2.82A4.5 4.5 0 0 1 2.82 9.18" fill="none" stroke="#d4d0c8" stroke-width="1"/></svg>
<div class="t " style="left:819.00px;top:340px;letter-spacing:0.366px;">Data</div>
<div class="sunk" style="left:884px;top:289px;width:203px;height:105px;background:#fff"></div>
<div class="t " style="left:887.00px;top:293px;letter-spacing:0.600px;">abs</div>
<div class="t " style="left:887.00px;top:309px;letter-spacing:0.133px;">acos</div>
<div class="t " style="left:887.00px;top:325px;letter-spacing:0.133px;">asin</div>
<div class="t " style="left:887.00px;top:341px;letter-spacing:0.367px;">atan</div>
<div class="t " style="left:887.00px;top:357px;letter-spacing:0.133px;">ceil</div>
<div class="t " style="left:887.00px;top:373px;letter-spacing:0.250px;">cos</div>
<div class="a hatch" style="left:1069px;top:291px;width:16px;height:101px"></div>
<div class="btn" style="left:1069px;top:291px;width:16px;height:16px"></div>
<div class="btn" style="left:1069px;top:307px;width:16px;height:12px"></div>
<div class="btn" style="left:1069px;top:376px;width:16px;height:16px"></div>
<svg class="a" style="left:1073px;top:297px" width="7" height="4"><path d="M3.500 0L7 4H0z" fill="#404040"/></svg>
<svg class="a" style="left:1073px;top:382px" width="7" height="4"><path d="M0 0h7L3.500 4z" fill="#404040"/></svg>
<div class="grp" style="left:559px;top:407px;width:531px;height:187px"></div>
<div class="a" style="left:564px;top:407px;width:134px;height:2px;background:#d4d0c8;"></div>
<div class="t " style="left:565.00px;top:402px;letter-spacing:-0.072px;">Expressão Coluna : Bairro3</div>
<div class="sunk" style="left:563px;top:420px;width:524px;height:143px;background:#fff"></div>
<div class="t mono" style="left:567px;top:427px;line-height:15px;height:15px">[Bairro]</div>
<div class="btn" style="left:755px;top:563px;width:140px;height:27px"></div>
<div class="t " style="left:781.00px;top:570px;letter-spacing:-0.100px;">Limpar expressão</div>
<div class="btn" style="left:906px;top:605px;width:90px;height:23px"></div>
<div class="t " style="left:934.00px;top:610px;letter-spacing:-0.217px;">Aceitar</div>
<div class="btn" style="left:1001px;top:605px;width:90px;height:23px"></div>
<div class="t " style="left:1025.00px;top:610px;letter-spacing:-0.300px;">Cancelar</div>
<div class="a" style="left:0px;top:0px;width:1104px;height:4px;background:#000;"></div>
<div class="a" style="left:0px;top:0px;width:4px;height:642px;background:#000;"></div>
</div></body></html>
